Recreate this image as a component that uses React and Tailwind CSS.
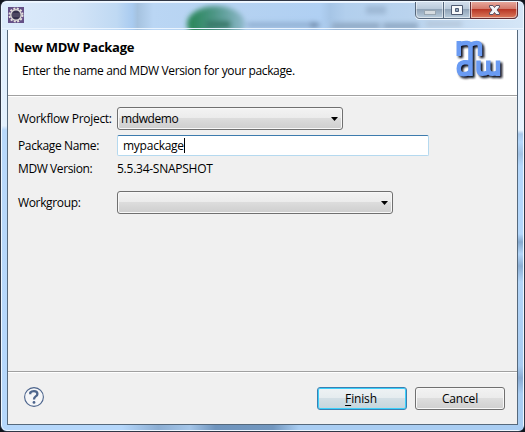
import React from "react";

function Titlebar() {
  return (
    <header className="relative flex h-[28px] shrink-0 items-start justify-between overflow-hidden bg-[linear-gradient(90deg,#dcebfb_0%,#d3e4f7_14%,#bfd9f3_22%,#a9cbf0_25%,#a5c2df_26%,#bad6f4_29%,#b5d2f1_45%,#b0d0f3_61%,#a6c5e6_63%,#b2cfed_66%,#b9d3ee_78%,#d5e6f7_100%)]">
      <svg className="absolute left-0 top-0" width="521" height="28" viewBox="2 2 521 28">
        <defs>
          <filter id="glass" x="-30%" y="-50%" width="160%" height="200%"><feGaussianBlur stdDeviation="2.4" /></filter>
          <linearGradient id="oval" x1="0" x2="1">
            <stop offset="0" stopColor="#258553" />
            <stop offset=".45" stopColor="#4b9584" />
            <stop offset="1" stopColor="#90b9cd" />
          </linearGradient>
        </defs>
        <g filter="url(#glass)">
          <ellipse cx="216" cy="24" rx="29" ry="18" fill="url(#oval)" />
          <rect x="206" y="21" width="25" height="7" rx="3" fill="#397869" />
          <path d="M247 25H320" stroke="#8fadd0" strokeWidth="5" />
          <path d="M311 22l10 3-10 3z" fill="#637f9e" />
          <path d="M332 26H418" stroke="#8ea7c2" strokeWidth="6" strokeDasharray="48 3 35" />
          <rect x="366" y="6" width="20" height="8" fill="#9db8d4" />
          <path d="M426 24H462" stroke="#b4c6d9" strokeWidth="5" />
        </g>
        <path d="M2 2.5H523M2 28.5H523" stroke="#eaf4ff" />
      </svg>
      <svg className="relative ml-[6px] mt-[5px]" width="16" height="16" viewBox="0 0 16 16">
        <rect width="16" height="16" fill="#655087" />
        <circle cx="8" cy="8" r="6.5" fill="none" stroke="#e6e1de" strokeWidth="2" strokeDasharray="2 1.4" />
        <circle cx="8" cy="8" r="5.2" fill="#34314c" stroke="#dcd9d8" strokeWidth="1.4" />
        <path d="M4 7h8M4 9h8" stroke="#676078" />
      </svg>
      <svg className="relative mr-[4px] -mt-[2px]" width="104" height="21" viewBox="415 0 104 21">
        <defs>
          <linearGradient id="plain" x1="0" y1="0" x2="0" y2="1">
            <stop stopColor="#d6e1ee" /><stop offset=".46" stopColor="#b9c9da" />
            <stop offset=".5" stopColor="#91a4b8" /><stop offset="1" stopColor="#bacddd" />
          </linearGradient>
          <linearGradient id="red" x1="0" y1="0" x2="0" y2="1">
            <stop stopColor="#e9ada2" /><stop offset=".46" stopColor="#d4796b" />
            <stop offset=".5" stopColor="#b93726" /><stop offset="1" stopColor="#db7a5d" />
          </linearGradient>
        </defs>
        <path d="M415 1H518V15Q518 20 513 20H420Q415 20 415 15Z" fill="#eff7ff" />
        <path d="M416 1H443V18H420Q416 18 416 14Z" fill="url(#plain)" />
        <path d="M444 1H470V18H444Z" fill="url(#plain)" />
        <path d="M471 1H517V14Q517 18 513 18H471Z" fill="url(#red)" />
        <path d="M415.5 0V14Q415.5 18.5 420 18.5H513Q517.5 18.5 517.5 14V0M443.5 1V18" fill="none" stroke="#56677c" />
        <path d="M470.5 1V18.5H513Q517.5 18.5 517.5 14V1" fill="none" stroke="#642d35" />
        <path d="M416.5 2V14Q416.5 17.5 420 17.5H442.5V1.5H417M444.5 17.5V1.5H469.5V17.5ZM471.5 17.5V1.5H516.5V14Q516.5 17.5 513 17.5Z" fill="none" stroke="#fff" strokeOpacity=".5" />
        <rect x="424.5" y="10.5" width="11" height="4" fill="#d6dce1" stroke="#98a5b0" />
        <path fillRule="evenodd" d="M451.5 5.5H462.5V14.5H451.5ZM455.5 8.5V11.5H458.5V8.5Z" fill="#f7f9fb" stroke="#4f5b72" />
        <path d="M489.5 5.5H493L494.5 7.5 496 5.5H499.5V7L497 10 499.5 13V14.5H496L494.5 12.5 493 14.5H489.5V13L492 10 489.5 7Z" fill="#f4f4f7" stroke="#5c5061" />
      </svg>
    </header>
  );
}

function MdwLogo() {
  return (
    <svg width="50" height="43" viewBox="455 39 50 43">
      <defs>
        <filter id="shadow"><feGaussianBlur stdDeviation=".8" /></filter>
        <g id="mdw" fill="none" strokeWidth="4.5">
          <path d="M458.8 41V56M459 44.5Q463 42.6 467 43Q470.5 43.3 470.5 46.5V76M471 44.5Q475 42.6 478 43.2Q480 43.8 480 47V56" />
          <path d="M470.5 63Q467.5 61.8 464 62.3Q458.8 63 458.8 68.5Q458.8 74.3 463.5 74.3Q468 74.3 470.5 71.5" />
          <path d="M478.5 60.5V69.5Q478.5 73.8 482.5 73.8Q486 73.8 488.3 72M488.3 60.5V69.5Q488.3 73.8 492.5 73.8Q496 73.8 498 72M498 60.5V76" />
        </g>
      </defs>
      <use href="#mdw" stroke="#07101e" transform="translate(2 2)" filter="url(#shadow)" />
      <use href="#mdw" stroke="#6a9bf3" />
    </svg>
  );
}

function Combo({ value, className }) {
  return (
    <div className={`flex h-[23px] items-center justify-between rounded-[3px] border border-[#707070] bg-[linear-gradient(#f3f3f3_0%,#ebebeb_48%,#dcdcdc_50%,#cecece_100%)] pl-[3px] pr-[4px] shadow-[inset_0_0_0_1px_#f8f8f8] ${className}`}>
      <span className="tracking-[-0.4px]">{value}</span>
      <svg width="7" height="4" viewBox="0 0 7 4"><path d="M0 0H7L3.5 4Z" fill="#000" /></svg>
    </div>
  );
}

export default function App() {
  return (
    <div className="flex h-[432px] w-[525px] overflow-hidden bg-[#10151d] font-['Open_Sans','Noto_Sans',sans-serif] text-[12px] leading-[16px] text-black">
      <div className="flex w-[525px] flex-col overflow-hidden rounded-[7px] border border-[#303746] bg-[linear-gradient(#e0effe_0%,#e3f0fd_29%,#b8d8fa_30%,#b5d7fb_100%)]">
        <div className="flex grow flex-col rounded-[6px] border border-[#eef7ff]">
          <Titlebar />
          <div className="flex grow bg-[linear-gradient(90deg,transparent_0%,transparent_23%,#8caed3_30%,#a5c6e9_36%,#6f94bd_41%,#7297bf_52%,#a9cdf2_57%,#a9cdf2_100%)] bg-[length:100%_5px] bg-bottom bg-no-repeat">
            <main className="ml-[5px] mt-[-1px] flex h-[396px] w-[511px] shrink-0 flex-col border border-[#56697c] bg-[#f0f0f0]">
              <section className="flex h-[65px] shrink-0 justify-between bg-white">
                <div>
                  <h1 className="ml-[6px] mt-[9px] whitespace-nowrap text-[13px] font-bold leading-[16px] tracking-[-0.27px]">New MDW Package</h1>
                  <p className="ml-[14px] mt-[8px] whitespace-nowrap tracking-[-0.36px]">Enter the name and MDW Version for your package.</p>
                </div>
                <div className="mr-[12px] mt-[9px]"><MdwLogo /></div>
              </section>
              <div className="h-[2px] shrink-0 border-b border-white bg-[#a0a0a0]" />
              <form className="flex grow flex-col pl-[10px] pt-[10px]">
                <div className="flex h-[23px] items-center">
                  <label className="w-[99px] whitespace-nowrap tracking-[-0.28px]">Workflow Project:</label>
                  <Combo value="mdwdemo" className="w-[226px]" />
                </div>
                <div className="mt-[5px] flex h-[21px] items-center">
                  <label className="w-[99px] whitespace-nowrap tracking-[-0.36px]">Package Name:</label>
                  <div className="flex h-[21px] w-[312px] items-center rounded-[2px] border border-[#b5d9ef] border-t-[#3d7bad] bg-white pl-[5px]">
                    <span className="tracking-[-0.25px]">mypackage</span><span className="h-[15px] w-px bg-black" />
                  </div>
                </div>
                <div className="mt-[5px] flex h-[16px] items-center">
                  <span className="w-[99px] whitespace-nowrap tracking-[-0.4px]">MDW Version:</span>
                  <span className="tracking-[-0.25px]">5.5.34-SNAPSHOT</span>
                </div>
                <div className="mt-[14px] flex h-[23px] items-center">
                  <label className="w-[99px] whitespace-nowrap tracking-[-0.35px]">Workgroup:</label>
                  <Combo value="" className="w-[276px]" />
                </div>
              </form>
              <div className="h-[2px] shrink-0 border-b border-white bg-[#a0a0a0]" />
              <footer className="flex h-[51px] shrink-0 items-start justify-between pl-[16px] pr-[12px] pt-[14px]">
                <svg width="20" height="20" viewBox="0 0 20 20">
                  <circle cx="10" cy="10" r="9.4" fill="#f5f6f8" stroke="#4c648c" strokeWidth="1.1" />
                  <path d="M6.3 7.2V5.6Q7.5 4.2 10 4.2Q13.4 4.2 13.4 6.9Q13.4 8.3 11.7 9.4Q10 10.5 10 12.5" fill="none" stroke="#4d658c" strokeWidth="2.3" />
                  <circle cx="10" cy="15.4" r="1.4" fill="#4d658c" />
                </svg>
                <div className="flex gap-[8px]">
                  <button type="button" className="h-[23px] w-[90px] rounded-[3px] border border-[#3c7fb1] bg-[linear-gradient(#eef2f4_0%,#e5ecef_48%,#d3dfe5_50%,#c5d5dc_100%)] pr-[2px] tracking-[-0.15px] shadow-[inset_0_0_0_1px_#3bd0fb]"><span className="underline underline-offset-2">F</span>inish</button>
                  <button type="button" className="h-[23px] w-[90px] rounded-[3px] border border-[#707070] bg-[linear-gradient(#f2f2f2_0%,#ebebeb_48%,#dddddd_50%,#cfcfcf_100%)] tracking-[-0.15px] shadow-[inset_0_0_0_1px_#f8f8f8]">Cancel</button>
                </div>
              </footer>
            </main>
            <div className="grow bg-[linear-gradient(#e3effd_0%,#e9f4ff_25%,#a9c8ea_26%,#b4d7fb_28%,#a2c2e4_31%,#b4d7fb_34%,#b4d7fb_51%,#86a9ce_53%,#b3d5f8_56%,#8caed3_59%,#b3d5f8_63%,#a8cbf0_84%,#89aad2_87%,#a9cdf2_91%,#a9cdf2_100%)]" />
          </div>
        </div>
      </div>
    </div>
  );
}
